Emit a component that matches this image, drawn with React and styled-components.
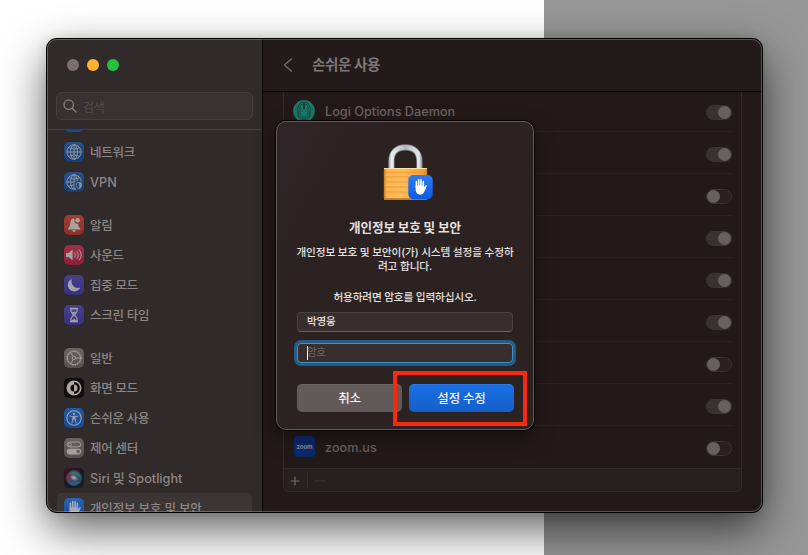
import React from "react";
import styled, { createGlobalStyle, css } from "styled-components";

const GlobalStyle = createGlobalStyle`
  *, *::before, *::after { box-sizing: border-box; }
  body { margin: 0; overflow: hidden; }
  button { font: inherit; letter-spacing: inherit; }
`;

const Desktop = styled.div`
  position: relative;
  width: 808px;
  height: 555px;
  padding: 39px 0 0 47px;
  overflow: hidden;
  background: linear-gradient(90deg, #fff 544px, #979797 544px);
  font-family: Inter, "Noto Sans CJK KR", sans-serif;
`;

const Window = styled.div`
  position: relative;
  display: flex;
  width: 715px;
  height: 473px;
  border-radius: 10px;
  overflow: hidden;
  background: #231918;
  &::after {
    content: "";
    position: absolute;
    inset: 0;
    border: 1px solid rgba(255, 255, 255, 0.25);
    border-radius: 10px;
    pointer-events: none;
  }
`;

const WindowShadow = styled.div`
  width: 715px;
  border-radius: 10px;
  box-shadow: 0 0 0 1px #000, 0 17px 46px rgba(0, 0, 0, 0.64), 0 0 12px rgba(0, 0, 0, 0.13);
`;

const Sidebar = styled.aside`
  display: flex;
  flex-direction: column;
  width: 216px;
  flex: none;
  background: #302a2a;
  border-right: 1px solid #0b0808;
`;

const TrafficLights = styled.div`
  display: flex;
  gap: 8px;
  padding: 20px 0 0 20px;
  height: 53px;
  flex: none;
`;

const Light = styled.i`
  width: 12px;
  height: 12px;
  border-radius: 50%;
  background: ${(p) => p.$color};
`;

const Search = styled.div`
  display: flex;
  align-items: center;
  gap: 6px;
  flex: none;
  width: 197px;
  height: 28px;
  margin: 0 0 9px 9px;
  padding-left: 6px;
  border: 1px solid #443e3d;
  border-radius: 6px;
  background: #373131;
  color: #544d4c;
  font-size: 12px;
  letter-spacing: -0.2px;
`;

const SidebarList = styled.nav`
  flex: 1;
  min-height: 0;
  overflow: hidden;
  border-top: 1px solid #443e3d;
`;

const SidebarScroll = styled.div`
  display: flex;
  flex-direction: column;
  gap: 13px;
  margin-top: -23px;
`;

const SidebarItem = styled.div`
  display: flex;
  align-items: center;
  gap: 6px;
  width: 195px;
  height: 30px;
  margin-left: 10px;
  padding-left: 7px;
  border-radius: 5px;
  background: ${(p) => (p.$selected ? "#3b3535" : "transparent")};
`;

const SidebarLabel = styled.span`
  margin-top: 2px;
  color: #8c8686;
  font-size: ${(p) => (p.$latin ? "12.7px" : "12.5px")};
  font-weight: 500;
  line-height: 20px;
  letter-spacing: ${(p) => p.$spacing ?? -0.25}px;
  white-space: nowrap;
`;

const AppIcon = styled.span`
  display: block;
  width: 20px;
  height: 20px;
  border-radius: 5px;
  flex: none;
  background: ${(p) => p.$fill};
  box-shadow: 0 0 1px rgba(0, 0, 0, 0.4);
  svg { display: block; }
`;

const Main = styled.main`
  flex: 1;
  display: flex;
  flex-direction: column;
  min-width: 0;
`;

const Toolbar = styled.header`
  display: flex;
  align-items: center;
  gap: 18px;
  height: 53px;
  flex: none;
  padding-left: 19px;
  border-bottom: 1px solid #0c0707;
  background: #231b1b;
`;

const PageTitle = styled.h1`
  margin: 0;
  color: #7e7777;
  font-size: 14.6px;
  font-weight: 700;
  line-height: 20px;
  letter-spacing: -0.45px;
`;

const AppTable = styled.section`
  width: 459px;
  height: 400px;
  margin-left: 20px;
  border: 1px solid #342a29;
  border-top: 0;
  border-radius: 0 0 6px 6px;
  overflow: hidden;
`;

const AppRow = styled.div`
  display: flex;
  align-items: center;
  height: 42px;
  margin: 0 9px 0 9px;
  border-bottom: 1px solid ${(p) => (p.$last ? "transparent" : "#2b2120")};
  &:first-child { height: 40px; }
`;

const AppName = styled.span`
  flex: 1;
  margin: ${(p) => p.$top ?? 1}px 0 0 10px;
  color: #6b6363;
  font-size: 12.7px;
  line-height: 18px;
  font-weight: 500;
`;

const IconSlot = styled.span`
  width: 22px;
  height: 22px;
  margin-top: ${(p) => (p.$first ? -1 : 1)}px;
  svg { display: block; }
`;

const ZoomIcon = styled.span`
  display: grid;
  place-items: center;
  width: 21px;
  height: 21px;
  margin-left: 1px;
  border-radius: 4px;
  background: #0c2a6c;
  color: #8c92a4;
  font-size: 6px;
  font-weight: 700;
  line-height: 1;
`;

const Toggle = styled.span`
  display: flex;
  justify-content: ${(p) => (p.$on ? "flex-end" : "flex-start")};
  align-items: center;
  width: 26px;
  height: 15px;
  margin-top: ${(p) => (p.$first ? 2 : 4)}px;
  border: 1px solid #3c3333;
  border-radius: 8px;
  background: ${(p) => (p.$on ? "#3a3131" : "#2a2020")};
  &::before {
    content: "";
    width: 13px;
    height: 13px;
    border-radius: 50%;
    background: #685f5f;
  }
`;

const TableFooter = styled.div`
  display: flex;
  align-items: center;
  height: 24px;
  padding-left: 6px;
  border-top: 1px solid #312829;
  background: #281f20;
`;

const FooterDivider = styled.i`
  width: 1px;
  height: 15px;
  margin: 0 7px 0 7px;
  background: #342b2b;
`;

const Dialog = styled.section`
  position: absolute;
  top: 121px;
  left: 276px;
  display: flex;
  flex-direction: column;
  align-items: center;
  width: 258px;
  height: 309px;
  padding: 19px 19px 0;
  border: 1px solid #625b5a;
  border-radius: 10px;
  background: linear-gradient(120deg, #30262a 0, #2c2222 25%);
  box-shadow: 0 0 0 1px #080404, 0 8px 22px rgba(0, 0, 0, 0.4);
  color: #e5e1e0;
`;

const DialogTitle = styled.h2`
  margin: 18px 0 0;
  font-size: 12.6px;
  font-weight: 700;
  line-height: 18px;
  letter-spacing: -0.12px;
  white-space: nowrap;
`;

const DialogText = styled.p`
  margin: ${(p) => p.$top}px 0 0;
  font-size: 10.7px;
  font-weight: 500;
  line-height: 14px;
  letter-spacing: ${(p) => p.$spacing}px;
  text-align: center;
  white-space: nowrap;
`;

const Field = styled.div`
  display: flex;
  align-items: center;
  width: 216px;
  height: 20px;
  flex: none;
  margin-top: 7px;
  padding-left: 9px;
  border: 1px solid #4a4241;
  border-bottom-color: #6a6261;
  border-radius: 4px;
  background: #382e2d;
  font-size: 10.5px;
  font-weight: 500;
  line-height: 14px;
  letter-spacing: -0.2px;
  ${(p) =>
    p.$focused &&
    css`
      margin-top: 11px;
      border-color: #3f91bd;
      box-shadow: 0 0 0 3px #225c87;
      color: #655c5b;
    `}
`;

const Caret = styled.i`
  width: 1px;
  height: 14px;
  margin-right: -1px;
  background: #fff;
`;

const Actions = styled.div`
  display: flex;
  gap: 7px;
  width: 217px;
  margin-top: 21px;
  align-self: flex-start;
  margin-left: 1px;
`;

const Button = styled.button`
  flex: 1;
  height: 28px;
  padding: 0;
  border: 0;
  border-radius: 5px;
  background: ${(p) => (p.$primary ? "linear-gradient(#1b70e4, #135fc9)" : "#625959")};
  box-shadow: inset 0 1px rgba(255, 255, 255, 0.08);
  color: #f4f1f1;
  font-size: 12.5px;
  font-weight: 500;
  line-height: 27px;
  letter-spacing: -0.2px;
`;

const Highlight = styled.div`
  position: absolute;
  top: 371px;
  left: 393px;
  width: 134px;
  height: 55px;
  border: 4px solid #f52a0e;
`;

const Svg = ({ children }) => (
  <svg width="20" height="20" viewBox="0 0 20 20" fill="none" stroke="#8e9299" strokeWidth="1">
    {children}
  </svg>
);

const Globe = ({ shield }) => (
  <Svg>
    <circle cx="10" cy="10" r="7.2" />
    <ellipse cx="10" cy="10" rx="3.4" ry="7.2" />
    <path d="M10 2.8v14.4M2.8 10h14.4M4.3 5.7q5.7 3 11.4 0M4.3 14.3q5.7-3 11.4 0" />
    {shield && (
      <>
        <path d="M11 10.4l4-1.3 3.5 1.3v3c0 2.4-1.4 3.6-3.5 4.4-2.3-.8-4-2-4-4.4z" fill="#1c4375" stroke="#1c4375" />
        <path d="M12.3 11.2l2.8-.9 2.5.9v2.3c0 1.7-1 2.6-2.5 3.2-1.7-.6-2.8-1.5-2.8-3.2z" strokeWidth=".8" />
        <path d="M15.1 10.4l2.4.9v2.3c0 1.6-.9 2.4-2.4 3z" fill="#8e9299" stroke="none" />
      </>
    )}
  </Svg>
);

const Bell = () => (
  <Svg>
    <path d="M10 3.3c-2.8.4-3.7 2.4-3.8 4.9-.1 3-.8 3.8-2.2 5.2v1h12.3v-1c-1.4-1.3-2.1-2.4-2.2-4.6A3.1 3.1 0 0 1 10.5 5zM8.2 15.3h3.8c-.2 1.2-1 1.7-1.9 1.7s-1.7-.5-1.9-1.7z" fill="#a8a2a0" stroke="none" />
    <circle cx="13.6" cy="5.3" r="2.2" fill="#a8a2a0" stroke="none" />
  </Svg>
);

const Speaker = () => (
  <Svg>
    <path d="M2 8h2.6l4-3.4v10.8l-4-3.4H2z" fill="#aaa09f" stroke="none" />
    <path d="M10.6 7.6q1.8 2.4 0 4.8M12.9 6.2q3 3.8 0 7.6M15.2 4.8q4.3 5.2 0 10.4" stroke="#a9a09f" strokeLinecap="round" />
  </Svg>
);

const Moon = () => (
  <Svg>
    <path d="M8 4a6.4 6.4 0 1 0 8.2 8.4A6.4 6.4 0 0 1 8 4z" fill="#a3a2ae" stroke="none" />
  </Svg>
);

const Hourglass = () => (
  <Svg>
    <path d="M6 3.4h8M6 16.6h8M7 4v2.6l2.5 3.3L7 13.4V16h6v-2.6l-2.5-3.5L13 6.6V4z" stroke="#a09fac" strokeWidth="1.2" />
    <path d="M7.7 6.8h4.6L10 9.8zM7.2 16l2.8-2.5 2.8 2.5z" fill="#a09fac" stroke="none" />
  </Svg>
);

const Gear = () => (
  <Svg>
    <circle cx="10" cy="10" r="6.6" stroke="#9d9998" />
    <circle cx="10" cy="10" r="7.5" stroke="#9d9998" strokeDasharray="1.2 1.22" />
    <circle cx="10" cy="10" r="1.7" stroke="#9d9998" />
    <path d="M11.7 10h5M9.1 8.5L6.6 4.2M9.1 11.5l-2.5 4.3" stroke="#9d9998" />
  </Svg>
);

const Contrast = () => (
  <Svg>
    <circle cx="10" cy="10" r="6.7" stroke="#aaa6a5" strokeWidth="1.6" />
    <path d="M10 3.3a6.7 6.7 0 0 0 0 13.4v-3.2a3.5 3.5 0 0 1 0-7z" fill="#aaa6a5" stroke="none" />
    <path d="M10 6.5a3.5 3.5 0 0 1 0 7z" fill="#aaa6a5" stroke="none" />
  </Svg>
);

const Person = () => (
  <Svg>
    <circle cx="10" cy="10" r="7.2" stroke="#98a2b5" strokeWidth="1.1" />
    <circle cx="10" cy="5.9" r="1.2" fill="#98a2b5" stroke="none" />
    <path d="M5.9 8.1l3 .5h2.2l3-.5M8.9 11l-1 4M11.1 11l1 4" stroke="#98a2b5" strokeLinecap="round" />
    <path d="M8.5 8.2h3v3.6h-3z" fill="#98a2b5" stroke="none" />
  </Svg>
);

const Switches = () => (
  <Svg>
    <rect x="3.3" y="4" width="13.4" height="4.9" rx="2.45" stroke="#a5a09f" />
    <circle cx="5.9" cy="6.45" r="1.6" stroke="#a5a09f" strokeWidth=".8" />
    <rect x="2.8" y="10.8" width="14.4" height="5.6" rx="2.8" fill="#a5a09f" stroke="none" />
    <circle cx="14.2" cy="13.6" r="1.8" fill="#625e5d" stroke="none" />
  </Svg>
);

const Siri = () => (
  <Svg>
    <defs>
      <linearGradient id="siri" x1="0" y1="0.3" x2="1" y2="0.7">
        <stop offset="0" stopColor="#7c2a45" />
        <stop offset=".5" stopColor="#3f4f60" />
        <stop offset="1" stopColor="#1f4a68" />
      </linearGradient>
      <radialGradient id="glow">
        <stop offset="0" stopColor="#c9c0c8" />
        <stop offset="1" stopColor="#8d7d98" stopOpacity="0" />
      </radialGradient>
    </defs>
    <circle cx="10" cy="10" r="7.6" fill="url(#siri)" stroke="#37525a" strokeWidth=".6" />
    <path d="M5 5.5c4-3 10-2 12 4C13 6.5 9 6 5 5.5z" fill="#2f7a64" stroke="none" />
    <path d="M4 13c2 5 9 5 12 .5-4 1-9 1.500-12-.5z" fill="#2d5c86" stroke="none" />
    <ellipse cx="9.8" cy="9.8" rx="5" ry="3.4" fill="url(#glow)" stroke="none" transform="rotate(25 10 10)" />
  </Svg>
);

const HandShape = ({ color }) => (
  <>
    <path d="M6.4 5.4v6M8.7 3.6v7M11 3.7v7M13.3 5.4v6" stroke={color} strokeWidth="1.6" strokeLinecap="round" />
    <path d="M5.6 9.2h8.5v2l1.3-1.8c.6-.8 1.7-.4 1.3.6l-2.2 5c-1 2.3-2.3 3.4-4.3 3.4-3 0-4.6-2.3-4.6-5.6z" fill={color} stroke="none" />
  </>
);

const Mouse = () => (
  <svg width="22" height="22" viewBox="0 0 22 22" fill="none" stroke="#12443b">
    <circle cx="11" cy="11" r="10.9" fill="#1a7764" stroke="none" />
    <rect x="5" y="2" width="12" height="18" rx="6" strokeWidth="1" />
    <rect x="7" y="3.8" width="8" height="14.4" rx="4" strokeWidth=".8" />
    <path d="M11 3v6" strokeWidth="2" />
  </svg>
);

const LockArt = styled.svg`
  flex: none;
  margin-left: 5px;
`;

const Lock = () => (
  <LockArt width="50" height="60" viewBox="3 0 50 60" fill="none">
    <defs>
      <linearGradient id="shackle" x1="8" x2="43" gradientUnits="userSpaceOnUse">
        <stop stopColor="#8f9297" />
        <stop offset=".1" stopColor="#e9ebed" />
        <stop offset=".5" stopColor="#b4b8bd" />
        <stop offset=".88" stopColor="#e6e8ea" />
        <stop offset="1" stopColor="#85888d" />
      </linearGradient>
      <linearGradient id="brass" x1="0" x2="1">
        <stop stopColor="#c97920" />
        <stop offset=".07" stopColor="#fbb653" />
        <stop offset=".45" stopColor="#fdbb59" />
        <stop offset=".93" stopColor="#f3a03a" />
        <stop offset="1" stopColor="#c77820" />
      </linearGradient>
      <linearGradient id="badge" x2="0" y2="1">
        <stop stopColor="#2f7df2" />
        <stop offset="1" stopColor="#0b5ae4" />
      </linearGradient>
    </defs>
    <path d="M11.4 28V20c0-8.600 5.600-13.600 14-13.600S39.400 11.400 39.400 20v8" stroke="#777c82" strokeWidth="6.2" />
    <path d="M11.4 28V20c0-8.600 5.600-13.600 14-13.600S39.400 11.400 39.400 20v8" stroke="url(#shackle)" strokeWidth="4.9" />
    <rect x="3.8" y="27" width="43.4" height="31.8" rx="1" fill="url(#brass)" />
    <path d="M4 31.5h43M4 36h43M4 41h43M4 46h43M4 51h43" stroke="#e58b2a" strokeOpacity=".42" strokeWidth="1.3" />
    <path d="M4 27.5h43" stroke="#ffe1a0" />
    <path d="M4 57.3h43v1.5H4z" fill="#bd7424" />
    <rect x="28.3" y="34" width="24.4" height="24.3" rx="5" fill="url(#badge)" />
    <g transform="translate(30 35.2)">
      <HandShape color="#fff" />
    </g>
  </LockArt>
);

const SearchIcon = () => (
  <svg width="14" height="14" viewBox="0 0 14 14" fill="none" stroke="#827b7a" strokeWidth="1.4" strokeLinecap="round">
    <circle cx="5.7" cy="5.7" r="4.7" />
    <path d="M9.2 9.2l3.8 3.8" />
  </svg>
);

const BackIcon = () => (
  <svg width="12" height="16" viewBox="0 0 12 16" fill="none" stroke="#6f6867" strokeWidth="1.4" strokeLinecap="round" strokeLinejoin="round">
    <path d="M9.5 1.8L2.5 8l7 6.2" />
  </svg>
);

const StepIcon = ({ plus }) => (
  <svg width="10" height="10" viewBox="0 0 10 10" stroke={plus ? "#716a69" : "#453c3c"} strokeWidth="1.2">
    <path d={plus ? "M.5 5h9M5 .5v9" : "M0 5h10"} />
  </svg>
);

const blue = "linear-gradient(#27518a, #173e74)";
const SidebarGroup = styled.div``;

const groups = [
  [
    { label: "", fill: "#1b4a8c" },
    { label: "네트워크", fill: blue, icon: <Globe /> },
    { label: "VPN", fill: blue, icon: <Globe shield />, latin: true, spacing: 0 },
  ],
  [
    { label: "알림", fill: "linear-gradient(#a33c35, #8b2f2a)", icon: <Bell /> },
    { label: "사운드", fill: "linear-gradient(#a02f49, #8c1e38)", icon: <Speaker /> },
    { label: "집중 모드", fill: "linear-gradient(#46408e, #37327c)", icon: <Moon /> },
    { label: "스크린 타임", fill: "linear-gradient(#46408e, #37327c)", icon: <Hourglass /> },
  ],
  [
    { label: "일반", fill: "linear-gradient(#686463, #555150)", icon: <Gear /> },
    { label: "화면 모드", fill: "#0e0c0c", icon: <Contrast /> },
    { label: "손쉬운 사용", fill: "linear-gradient(#2259a2, #19498e)", icon: <Person /> },
    { label: "제어 센터", fill: "linear-gradient(#686463, #555150)", icon: <Switches /> },
    { label: "Siri 및 Spotlight", fill: "linear-gradient(135deg, #40101f, #181a25 60%)", icon: <Siri />, latin: true, spacing: 0 },
    {
      label: "개인정보 보호 및 보안",
      fill: "linear-gradient(#2866b0, #19498e)",
      icon: <Svg><HandShape color="#a4aab5" /></Svg>,
      selected: true,
      spacing: -0.15,
    },
  ],
];

const apps = [
  { name: "Logi Options Daemon", icon: <Mouse />, on: true },
  { on: true },
  { on: false },
  { on: true },
  { on: true },
  { on: true },
  { on: false },
  { on: true },
  { name: "zoom.us", icon: <ZoomIcon>zoom</ZoomIcon>, on: false, top: 3 },
];

export default function App() {
  return (
    <Desktop>
      <GlobalStyle />
      <WindowShadow>
        <Window>
          <Sidebar>
            <TrafficLights>
              <Light $color="#7a7070" />
              <Light $color="#ffb330" />
              <Light $color="#27c140" />
            </TrafficLights>
            <Search>
              <SearchIcon />
              검색
            </Search>
            <SidebarList>
              <SidebarScroll>
                {groups.map((items, i) => (
                  <SidebarGroup key={i}>
                    {items.map((item, j) => (
                      <SidebarItem key={j} $selected={item.selected}>
                        <AppIcon $fill={item.fill}>{item.icon}</AppIcon>
                        <SidebarLabel $latin={item.latin} $spacing={item.spacing}>
                          {item.label}
                        </SidebarLabel>
                      </SidebarItem>
                    ))}
                  </SidebarGroup>
                ))}
              </SidebarScroll>
            </SidebarList>
          </Sidebar>
          <Main>
            <Toolbar>
              <BackIcon />
              <PageTitle>손쉬운 사용</PageTitle>
            </Toolbar>
            <AppTable>
              {apps.map((app, i) => (
                <AppRow key={i} $last={i === apps.length - 1}>
                  <IconSlot $first={i === 0}>{app.icon}</IconSlot>
                  <AppName $top={app.top}>{app.name}</AppName>
                  <Toggle $on={app.on} $first={i === 0} />
                </AppRow>
              ))}
              <TableFooter>
                <StepIcon plus />
                <FooterDivider />
                <StepIcon />
              </TableFooter>
            </AppTable>
          </Main>
        </Window>
      </WindowShadow>
      <Dialog>
        <Lock />
        <DialogTitle>개인정보 보호 및 보안</DialogTitle>
        <DialogText $top={9} $spacing={-0.16}>
          개인정보 보호 및 보안이(가) 시스템 설정을 수정하
          <br />
          려고 합니다.
        </DialogText>
        <DialogText $top={17} $spacing={-0.2}>
          허용하려면 암호를 입력하십시오.
        </DialogText>
        <Field>박영웅</Field>
        <Field $focused>
          <Caret />
          암호
        </Field>
        <Actions>
          <Button>취소</Button>
          <Button $primary>설정 수정</Button>
        </Actions>
      </Dialog>
      <Highlight />
    </Desktop>
  );
}
